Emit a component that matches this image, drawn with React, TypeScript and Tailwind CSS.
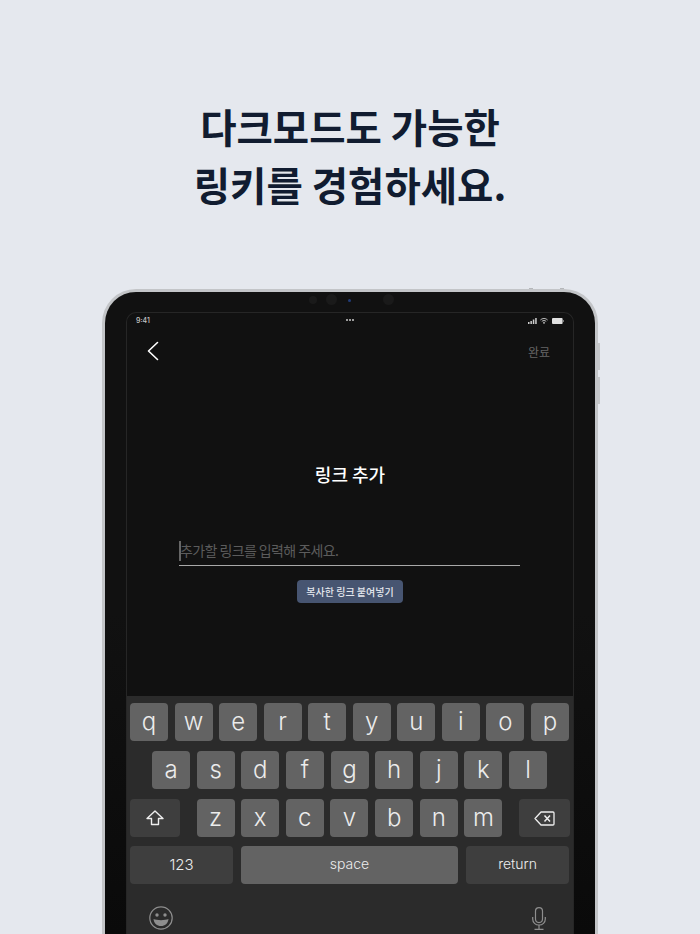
const row1 = ["q", "w", "e", "r", "t", "y", "u", "i", "o", "p"];
const row2 = ["a", "s", "d", "f", "g", "h", "j", "k", "l"];
const row3 = ["z", "x", "c", "v", "b", "n", "m"];

function LetterKey({ label }: { label: string }) {
  return (
    <div className="flex h-[38px] w-[38px] items-center justify-center rounded-[4px] bg-[#636363] pb-[1px] text-[24px] font-light text-[#ececec]">
      {label}
    </div>
  );
}

function StatusIcons() {
  return (
    <div className="flex items-center gap-[3px]">
      <svg width="9" height="6" viewBox="0 0 9 6" fill="#cfcfcf">
        <rect x="0" y="4" width="1.5" height="2" />
        <rect x="2.4" y="3" width="1.5" height="3" />
        <rect x="4.8" y="1.5" width="1.5" height="4.5" />
        <rect x="7.2" y="0" width="1.5" height="6" />
      </svg>
      <svg width="8" height="6" viewBox="0 0 8 6" fill="none" stroke="#d8d8d8" strokeWidth="0.9">
        <path d="M0.4 2 C2.5 0 5.5 0 7.6 2" />
        <path d="M1.8 3.4 C3 2.3 5 2.3 6.2 3.4" />
        <path d="M4 6 L2.9 4.7 C3.5 4.2 4.5 4.2 5.1 4.7 Z" fill="#d8d8d8" stroke="none" />
      </svg>
      <svg width="12" height="6" viewBox="0 0 12 6" className="ml-[1px]">
        <rect x="0" y="0" width="10.6" height="6" rx="1" fill="#e0e0e0" />
        <rect x="11" y="2" width="1" height="2" fill="#777" />
      </svg>
    </div>
  );
}

function Keyboard() {
  return (
    <div className="h-[241px] bg-[#2b2b2b] pl-[3px] pt-[7px] font-['Inter',sans-serif]">
      <div className="flex w-[439px] justify-between">
        {row1.map((k) => (
          <LetterKey key={k} label={k} />
        ))}
      </div>
      <div className="ml-[22px] mt-[10px] flex w-[395px] justify-between">
        {row2.map((k) => (
          <LetterKey key={k} label={k} />
        ))}
      </div>
      <div className="mt-[10px] flex w-[440px] justify-between">
        <div className="flex h-[38px] w-[50px] items-center justify-center rounded-[4px] bg-[#3e3e3e]">
          <svg width="18" height="16" viewBox="0 0 18 16" fill="none" stroke="#eeeeee" strokeWidth="1.4" strokeLinejoin="round">
            <path d="M9 1 L17 8.5 H12.5 V14.5 H5.5 V8.5 H1 Z" />
          </svg>
        </div>
        <div className="ml-[7px] flex w-[306px] justify-between">
          {row3.map((k) => (
            <LetterKey key={k} label={k} />
          ))}
        </div>
        <div className="ml-[7px] flex h-[38px] w-[51px] items-center justify-center rounded-[4px] bg-[#3e3e3e]">
          <svg width="21" height="15" viewBox="0 0 21 15" fill="none" stroke="#eeeeee" strokeWidth="1.3" strokeLinejoin="round">
            <path d="M7 1 H19 a1 1 0 0 1 1 1 V13 a1 1 0 0 1 -1 1 H7 L1 7.5 Z" />
            <path d="M10.5 4.5 L16 10.5 M16 4.5 L10.5 10.5" strokeWidth="1.5" />
          </svg>
        </div>
      </div>
      <div className="mt-[9px] flex w-[439px] justify-between">
        <div className="flex h-[38px] w-[103px] items-center justify-center rounded-[4px] bg-[#3e3e3e] text-[15px] font-light text-[#ececec]">
          123
        </div>
        <div className="flex h-[38px] w-[217px] items-center justify-center rounded-[4px] bg-[#636363] pb-[3px] text-[14px] font-light text-[#ececec]">
          space
        </div>
        <div className="flex h-[38px] w-[103px] items-center justify-center rounded-[4px] bg-[#3e3e3e] pb-[3px] text-[14px] font-light text-[#ececec]">
          return
        </div>
      </div>
      <div className="ml-[19px] mt-[22px] flex w-[400px] items-center justify-between">
        <svg width="24" height="24" viewBox="0 0 24 24" fill="none" stroke="#8e8e8e" strokeWidth="1.2">
          <circle cx="12" cy="12" r="11.2" />
          <circle cx="8" cy="9" r="1.7" fill="#8e8e8e" stroke="none" />
          <circle cx="16" cy="9" r="1.7" fill="#8e8e8e" stroke="none" />
          <path d="M4.5 13 C8 14.5 16 14.5 19.5 13 C19 17.5 16 20 12 20 C8 20 5 17.5 4.5 13 Z" fill="#8e8e8e" stroke="none" />
        </svg>
        <svg width="14" height="23" viewBox="0 0 14 23" fill="none" stroke="#8e8e8e" strokeWidth="1.2" className="mr-[3px]">
          <rect x="3.5" y="0.6" width="7" height="15" rx="3.5" />
          <path d="M0.7 10 V12 C0.7 15.5 3.4 18 7 18 C10.6 18 13.3 15.5 13.3 12 V10" />
          <path d="M7 18 V22 M2.5 22.4 H11.5" />
        </svg>
      </div>
    </div>
  );
}

export default function App() {
  return (
    <div className="h-[934px] overflow-hidden bg-[#e5e8ee] font-['Noto_Sans_CJK_KR','Noto_Sans',sans-serif]">
      <h1 className="pt-[97px] text-center text-[39.5px] leading-[58px] font-bold text-[#111c30]">
        다크모드도 가능한
        <br />
        링키를 경험하세요.
      </h1>

      <div className="relative mx-auto mt-[76px] w-[496px]">
        {/* top and side hardware buttons */}
        <div className="absolute -top-[1px] left-[427px] h-[2px] w-[4px] bg-[#b5b7ba]" />
        <div className="absolute -top-[1px] left-[458px] h-[2px] w-[4px] bg-[#b5b7ba]" />
        <div className="absolute -right-[2px] top-[54px] h-[27px] w-[2px] bg-[#c4c6c9]" />
        <div className="absolute -right-[2px] top-[88px] h-[27px] w-[2px] bg-[#c4c6c9]" />

        <div className="relative h-[645px] rounded-t-[34px] border-x-[3px] border-t-[3px] border-[#c3c5c8] bg-[linear-gradient(#111111_0%,#111111_50%,#0a0a0a_100%)] px-[21px] pt-[20px]">
          {/* cameras */}
          <div className="absolute left-[204px] top-[4px] h-[8px] w-[8px] rounded-full bg-[#1a1a1a]" />
          <div className="absolute left-[221px] top-[2px] h-[11px] w-[11px] rounded-full bg-[#1a1a1a]" />
          <div className="absolute left-[243px] top-[7px] h-[3px] w-[3px] rounded-full bg-[#223c78]" />
          <div className="absolute left-[278px] top-[2px] h-[11px] w-[11px] rounded-full bg-[#1a1a1a]" />

          <div className="overflow-hidden rounded-t-[10px] border-x border-t border-[#262626] bg-[#111111]">
            <div className="relative flex h-[14px] items-center justify-between px-[9px] pt-[1px]">
              <span className="mt-[1px] font-['Inter',sans-serif] text-[7px] font-medium text-[#c8c8c8]">9:41</span>
              <div className="absolute left-[219px] top-[6px] flex gap-[1px]">
                <span className="h-[2px] w-[2px] rounded-full bg-[#c8c8c8]" />
                <span className="h-[2px] w-[2px] rounded-full bg-[#c8c8c8]" />
                <span className="h-[2px] w-[2px] rounded-full bg-[#c8c8c8]" />
              </div>
              <StatusIcons />
            </div>

            <div className="flex h-[47px] items-center justify-between pl-[20px] pr-[23px]">
              <svg width="12" height="20" viewBox="0 0 12 20" fill="none" stroke="#ffffff" strokeWidth="1.6" strokeLinecap="round" strokeLinejoin="round">
                <path d="M10.5 1.5 L1.5 10 L10.5 18.5" />
              </svg>
              <span className="mt-[3px] text-[12px] text-[#666666]">완료</span>
            </div>

            <h2 className="mt-[87px] text-center text-[18px] leading-[26px] font-medium text-white">링크 추가</h2>

            <div className="ml-[52px] mr-[53px] mt-[49px] flex h-[30px] items-end border-b-[1.5px] border-[#a8a8a8] pb-[4px]">
              <span className="h-[20px] w-[2px] shrink-0 bg-[#666666]" />
              <span className="-ml-[1px] text-[14px] leading-[22px] tracking-[-0.6px] text-[#5c5c5c]">추가할 링크를 입력해 주세요.</span>
            </div>

            <div className="mt-[14px] flex justify-center">
              <button className="h-[23px] w-[106px] rounded-[4px] bg-[#475571] text-[10px] font-medium text-[#e5e8ee]">
                복사한 링크 붙여넣기
              </button>
            </div>

            <div className="h-[93px]" />
            <Keyboard />
          </div>
        </div>
      </div>
    </div>
  );
}
